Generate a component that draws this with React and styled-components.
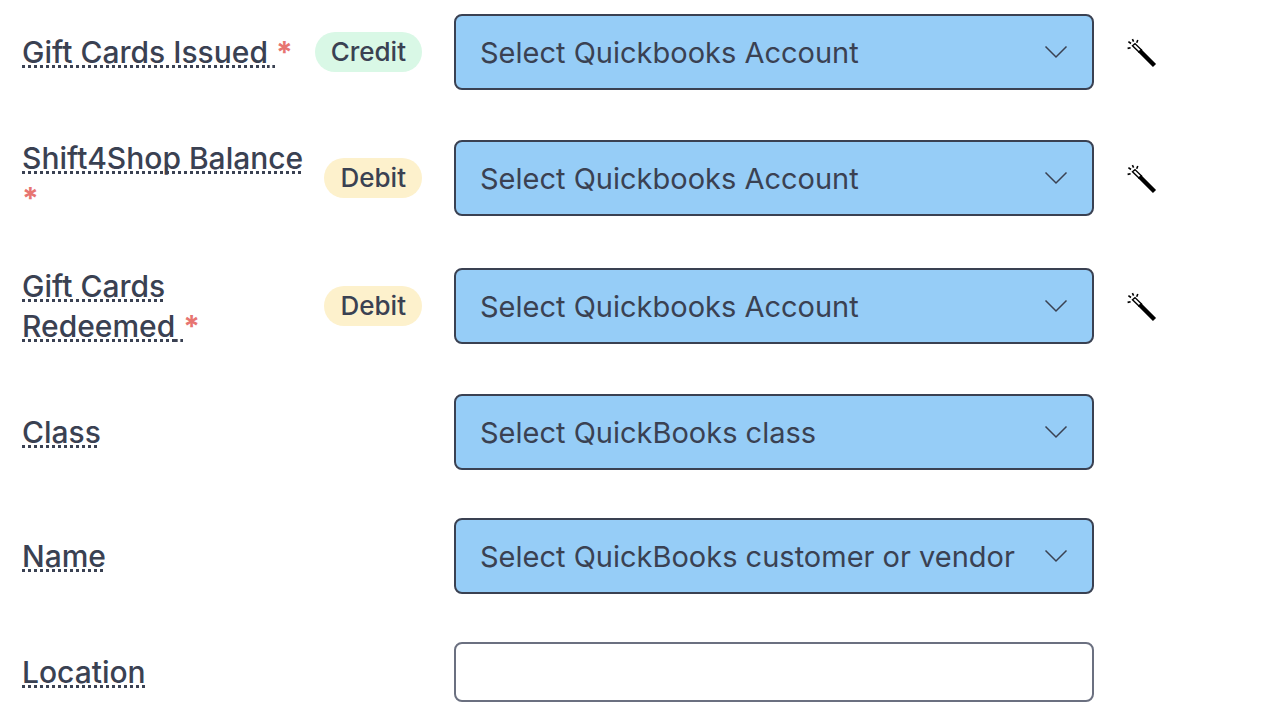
import React, { useState } from 'react'
import styled, { createGlobalStyle } from 'styled-components'

const GlobalStyle = createGlobalStyle`
    * {
        box-sizing: border-box;
    }

    body {
        margin: 0;
        background-color: #ffffff;
        color: #3a4152;
        font-family: Inter, sans-serif;
    }
`

const Form = styled.form`
    display: flex;
    flex-direction: column;
    gap: 48px;
    padding: 14px 104px 10px 22px;
`

const Row = styled.div`
    display: grid;
    grid-template-columns: minmax(0, 5fr) minmax(0, 8fr) 32px;
    column-gap: 32px;
    align-items: center;
`

const LabelCell = styled.div`
    display: flex;
    align-items: center;
    justify-content: space-between;
    gap: 12px;
`

const Label = styled.label`
    font-size: 30px;
    font-weight: 500;
    line-height: 40px;
`

const LabelText = styled.span`
    text-decoration: underline dotted 3px;
    text-underline-offset: 2px;
    text-decoration-skip-ink: none;
`

const Required = styled.span`
    color: #e77571;
    font-weight: 700;
`

const Badge = styled.span`
    flex-shrink: 0;
    padding: 0 16px;
    border-radius: 20px;
    background-color: ${props => props.$type === 'Credit' ? '#d9f8e6' : '#fdf1cc'};
    font-size: 26px;
    font-weight: 500;
    line-height: 40px;
`

const SelectWrap = styled.div`
    position: relative;
`

const Select = styled.select`
    display: block;
    appearance: none;
    width: 100%;
    height: 76px;
    padding: 0 60px 0 24px;
    border: 2px solid #3a4152;
    border-radius: 8px;
    background-color: #96cdf7;
    color: inherit;
    font-family: inherit;
    font-size: 29px;
    text-overflow: ellipsis;
`

const Chevron = styled.svg`
    position: absolute;
    top: 50%;
    right: 26px;
    transform: translateY(-50%);
    pointer-events: none;
`

const Input = styled.input`
    width: 100%;
    height: 60px;
    padding: 0 24px;
    border: 2px solid #6b7080;
    border-radius: 8px;
    background-color: #ffffff;
    color: inherit;
    font-family: inherit;
    font-size: 29px;
`

const WandButton = styled.button`
    width: 32px;
    height: 32px;
    padding: 0;
    border: none;
    background: none;
    cursor: pointer;
`

const fields = [
    { name: 'giftCardsIssued', label: 'Gift Cards Issued', type: 'Credit', placeholder: 'Select Quickbooks Account' },
    { name: 'balance', label: 'Shift4Shop Balance', type: 'Debit', placeholder: 'Select Quickbooks Account' },
    { name: 'giftCardsRedeemed', label: 'Gift Cards Redeemed', type: 'Debit', placeholder: 'Select Quickbooks Account' },
    { name: 'class', label: 'Class', placeholder: 'Select QuickBooks class' },
    { name: 'name', label: 'Name', placeholder: 'Select QuickBooks customer or vendor' },
]

const initialForm = {
    giftCardsIssued: '',
    balance: '',
    giftCardsRedeemed: '',
    class: '',
    name: '',
    location: ''
}

function WandIcon(){
    return(
        <svg width='32' height='32' viewBox='0 0 32 32' fill='none' stroke='#000000' aria-hidden='true'>
            <path d='M13.5 14.5 L28.5 29.5' strokeWidth='4.4' />
            <path d='M6.5 9.8 L9 7.6 L15.5 14 L13 16 Z' strokeWidth='1.4' />
            <path d='M6.4 3.2 L7.6 5.6 M11.8 4 L10.7 6.8 M2.4 5.6 L5 7.5 M1.6 12.4 L4.6 11.7' strokeWidth='1.6' />
        </svg>
    )
}

export default function App(){

    const [form, setForm] = useState(initialForm)

    const handleChange = (e) => {
        setForm({...form, [e.target.name]: e.target.value})
    }

    return(
        <>
            <GlobalStyle />
            <Form>
                {fields.map(field => (
                    <Row key={field.name}>
                        <LabelCell>
                            <Label htmlFor={field.name}>
                                <LabelText>{field.label}{field.type && ' '}</LabelText>
                                {field.type && <Required>*</Required>}
                            </Label>
                            {field.type && <Badge $type={field.type}>{field.type}</Badge>}
                        </LabelCell>
                        <SelectWrap>
                            <Select id={field.name} name={field.name} value={form[field.name]} onChange={handleChange}>
                                <option value=''>{field.placeholder}</option>
                            </Select>
                            <Chevron width='24' height='14' viewBox='0 0 24 14' fill='none' stroke='#3a4152' strokeWidth='1.5'>
                                <path d='M1.5 1.5 L12 12 L22.5 1.5' />
                            </Chevron>
                        </SelectWrap>
                        {field.type && <WandButton type='button' aria-label={`Fill ${field.label}`}><WandIcon /></WandButton>}
                    </Row>
                ))}
                <Row>
                    <LabelCell>
                        <Label htmlFor='location'><LabelText>Location</LabelText></Label>
                    </LabelCell>
                    <Input id='location' name='location' value={form.location} onChange={handleChange} />
                </Row>
            </Form>
        </>
    )
}
